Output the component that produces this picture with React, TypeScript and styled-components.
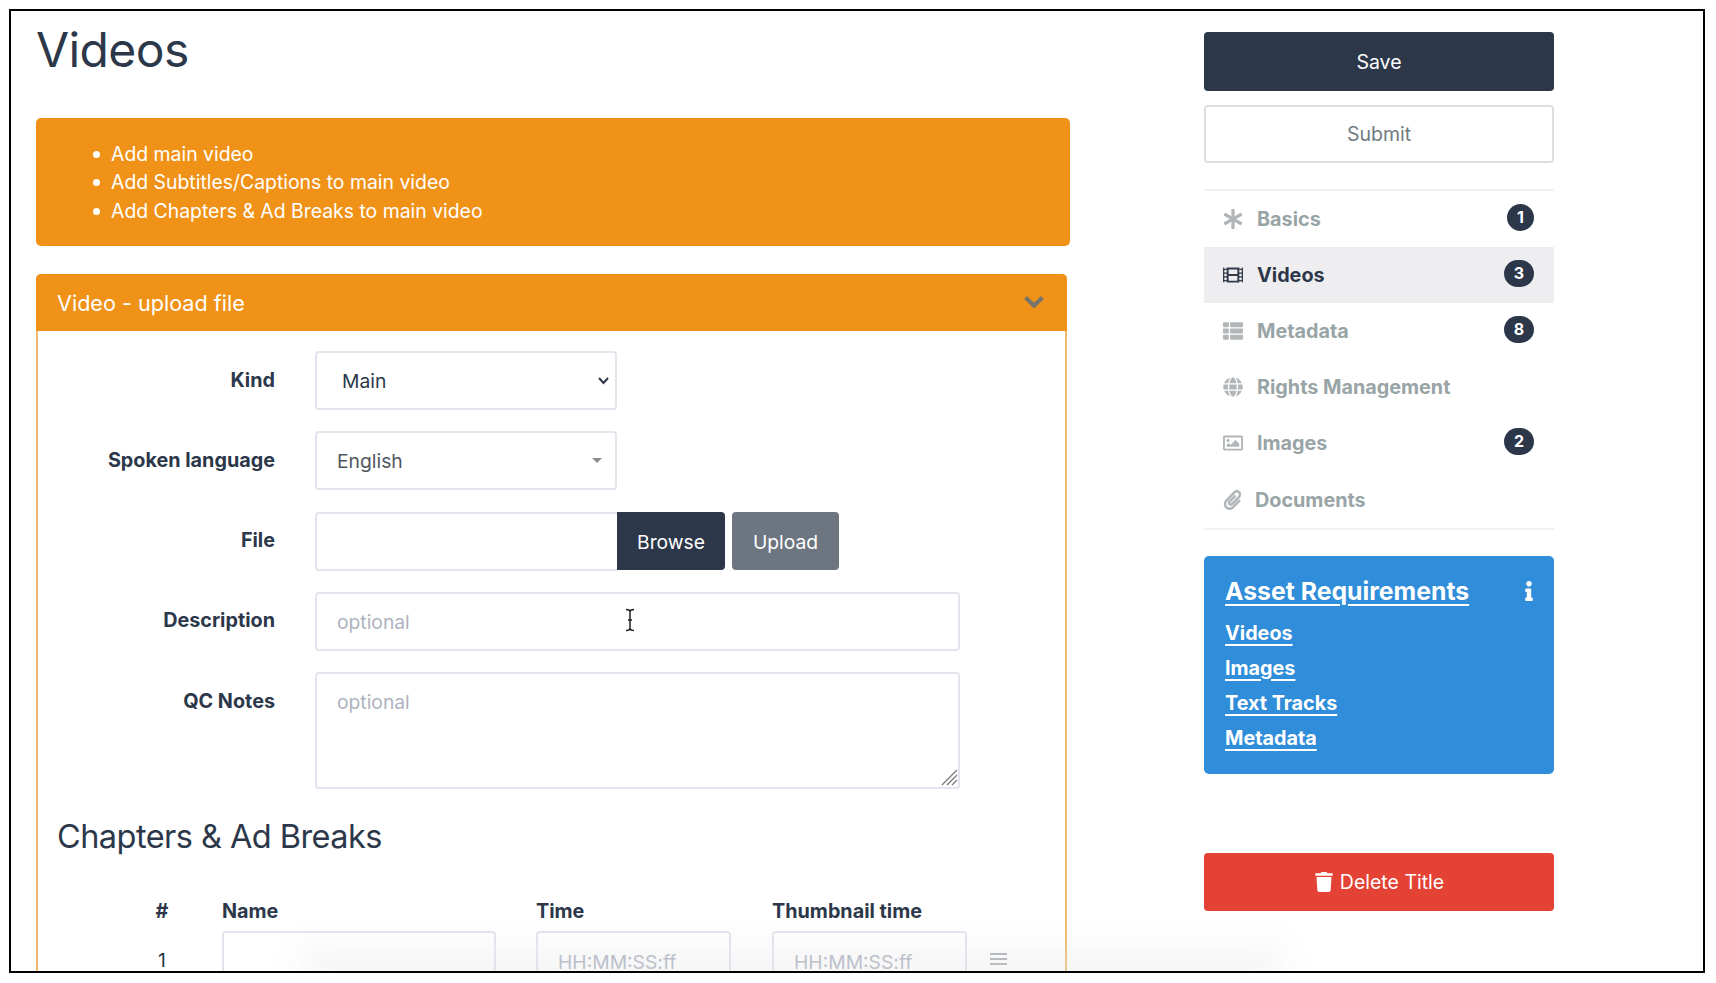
import React from 'react';
import styled, { createGlobalStyle } from 'styled-components';
import { FaAsterisk, FaFilm, FaThList, FaGlobe, FaRegImage, FaPaperclip, FaInfo, FaTrash } from 'react-icons/fa';

const navy = '#2c384a';
const orange = '#f09218';

const Global = createGlobalStyle`
  html, body { margin: 0; padding: 0; background: #fff; }
  body { font-family: Inter, "Liberation Sans", sans-serif; color: ${navy}; font-size: 19.3px; }
  * { box-sizing: border-box; }
`;

const Frame = styled.div`
  position: relative;
  margin: 9px 0 0 9px;
  width: 1696px;
  height: 964px;
  border: 2px solid #000;
  overflow: hidden;
  display: flex;
  align-items: flex-start;
  gap: 134px;
  padding-left: 25px;
`;

const Main = styled.main`
  width: 1034px;
  flex: none;
`;

const Title = styled.h1`
  margin: 0;
  height: 107px;
  font-size: 48px;
  line-height: 77px;
  font-weight: 400;
  letter-spacing: -0.6px;
`;

const Alert = styled.div`
  height: 128px;
  background: ${orange};
  border-radius: 5px;
  color: #fff;
  margin-bottom: 28px;
  padding: 22px 0 0 75px;
  font-size: 19.4px;
`;

const AlertList = styled.ul`
  margin: 0;
  padding: 0;
  list-style: none;
  li { position: relative; line-height: 28.4px; margin: 0; }
  li::before {
    content: '';
    position: absolute;
    left: -18px;
    top: 11px;
    width: 7px;
    height: 7px;
    border-radius: 50%;
    background: #fff;
  }
`;

const Card = styled.section`
  width: 1031px;
  border: 2px solid #ecbc6c;
  border-top: none;
  border-radius: 5px 5px 0 0;
`;

const CardHeader = styled.header`
  height: 57px;
  margin: 0 -2px;
  background: ${orange};
  border-radius: 5px 5px 0 0;
  color: #fff;
  display: flex;
  align-items: center;
  justify-content: space-between;
  padding: 1px 22px 0 21px;
  font-size: 21.6px;
`;

const Chevron = styled.svg`
  width: 22px;
  height: 15px;
  margin-top: -4px;
`;

const CardBody = styled.div`
  padding: 20px 0 0 19px;
`;

const Form = styled.div`
  display: grid;
  grid-template-columns: 218px 1fr;
  column-gap: 40px;
  row-gap: 21.25px;
`;

const Label = styled.label<{ $top?: boolean }>`
  text-align: right;
  font-weight: 700;
  font-size: 19.8px;
  line-height: 29px;
  align-self: ${p => (p.$top ? 'start' : 'center')};
  padding-top: ${p => (p.$top ? '16px' : '0')};
  margin-top: -1px;
  color: ${navy};
`;

const Control = styled.div<{ $w?: number }>`
  position: relative;
  width: ${p => (p.$w ? `${p.$w}px` : 'auto')};
  display: flex;
`;

const fieldCss = `
  display: block;
  width: 100%;
  border: 2px solid #e3e5ee;
  border-radius: 4px;
  background: #fff;
  font-family: inherit;
  font-size: 19.3px;
  color: ${navy};
  outline: none;
  &::placeholder { color: #aeb4bf; opacity: 1; }
`;

const Select = styled.select<{ $pad: number; $muted?: boolean }>`
  ${fieldCss}
  height: 59px;
  appearance: none;
  padding: 1px 0 0 ${p => p.$pad}px;
  color: ${p => (p.$muted ? '#4f5660' : navy)};
`;

const SelectChevron = styled.svg`
  position: absolute;
  right: 7px;
  top: 25px;
  width: 13px;
  height: 9px;
`;

const SelectCaret = styled.span`
  position: absolute;
  right: 15px;
  top: 27px;
  border-left: 5px solid transparent;
  border-right: 5px solid transparent;
  border-top: 5px solid #8d8d8d;
`;

const Input = styled.input`
  ${fieldCss}
  height: 59px;
  padding: 1px 20px 0;
`;

const FileInput = styled.input`
  ${fieldCss}
  flex: none;
  width: 302px;
  height: 59px;
  border-right: none;
  border-radius: 4px 0 0 4px;
`;

const FileBtn = styled.button<{ $bg: string; $w: number; $left?: number; $square?: boolean }>`
  flex: none;
  width: ${p => p.$w}px;
  height: 58px;
  margin-left: ${p => p.$left ?? 0}px;
  padding: 2px 0 0;
  border: none;
  border-radius: ${p => (p.$square ? '0 4px 4px 0' : '4px')};
  background: ${p => p.$bg};
  color: #fff;
  font-family: inherit;
  font-size: 19.3px;
`;

const Area = styled.textarea`
  ${fieldCss}
  height: 117px;
  padding: 16px 20px;
  resize: none;
`;

const Hatch = styled.svg`
  position: absolute;
  right: 2px;
  bottom: 3px;
  width: 17px;
  height: 17px;
`;

const Cursor = styled.svg`
  position: absolute;
  left: 310px;
  top: 16px;
  width: 10px;
  height: 24px;
`;

const Heading = styled.h3`
  margin: 23px 0 0;
  font-size: 32.5px;
  line-height: 50px;
  font-weight: 400;
  letter-spacing: -0.55px;
`;

const Table = styled.div`
  display: grid;
  grid-template-columns: 40px 274px 196px 195px 24px;
  column-gap: 40px;
  margin: 35px 0 0 85px;
  align-items: center;
`;

const Th = styled.div<{ $center?: boolean }>`
  font-weight: 700;
  font-size: 19.8px;
  line-height: 29px;
  margin-bottom: 5px;
  text-align: ${p => (p.$center ? 'center' : 'left')};
`;

const Td = styled.div`
  text-align: center;
  margin-top: -2px;
`;

const CellInput = styled.input`
  ${fieldCss}
  height: 59px;
  padding: 3px 20px 0;
`;

const TimeInput = styled(CellInput)`
  width: 195px;
`;

const Drag = styled.div`
  margin-left: -17px;
  margin-top: -3px;
  width: 17px;
  display: flex;
  flex-direction: column;
  gap: 3px;
  span { display: block; height: 2px; background: #a9adb3; }
`;

const Side = styled.aside`
  width: 350px;
  flex: none;
  padding-top: 21px;
`;

const Btn = styled.button<{ $bg: string; $fg: string; $line?: string; $h: number; $mt?: number }>`
  display: flex;
  align-items: center;
  justify-content: center;
  gap: 6px;
  width: 100%;
  height: ${p => p.$h}px;
  margin-top: ${p => p.$mt ?? 0}px;
  background: ${p => p.$bg};
  color: ${p => p.$fg};
  border: ${p => (p.$line ? `2px solid ${p.$line}` : 'none')};
  border-radius: 4px;
  font-family: inherit;
  font-size: 19.5px;
`;

const Nav = styled.nav`
  margin-top: 26px;
  border-bottom: 2px solid #f0f1f1;
  border-top: 2px solid #f0f1f1;
`;

const NavRow = styled.div<{ $active?: boolean }>`
  height: 56.1px;
  display: flex;
  align-items: center;
  padding: 0 20px 0 19px;
  background: ${p => (p.$active ? '#eeedef' : 'transparent')};
  color: ${p => (p.$active ? navy : '#98a4a6')};
  font-weight: 700;
  font-size: 19.8px;
  & + & { border-top: ${p => (p.$active ? 'none' : '2px solid #f3f4f4')}; }
`;

const NavIcon = styled.span<{ $w: number; $active?: boolean }>`
  flex: none;
  width: ${p => p.$w}px;
  margin-right: 13px;
  display: flex;
  font-size: 20px;
  color: ${p => (p.$active ? '#333c4a' : '#b2b6b8')};
`;

const NavText = styled.span`
  flex: 1;
`;

const Badge = styled.span<{ $w: number }>`
  width: ${p => p.$w}px;
  height: 27px;
  margin-top: -4px;
  border-radius: 14px;
  background: ${navy};
  color: #fff;
  display: flex;
  align-items: center;
  justify-content: center;
  font-size: 16px;
  font-weight: 700;
`;

const Asset = styled.div`
  margin-top: 26px;
  height: 218px;
  background: #308dd9;
  border-radius: 5px;
  color: #fff;
  padding: 17px 21px 0;
  font-weight: 700;
`;

const AssetHead = styled.div`
  display: flex;
  align-items: center;
  justify-content: space-between;
  margin-bottom: 7px;
  svg { margin-right: -6px; }
`;

const AssetTitle = styled.a`
  font-size: 24.8px;
  line-height: 36px;
  text-decoration: underline;
  text-underline-offset: 4px;
  text-decoration-thickness: 1.5px;
`;

const AssetLink = styled.a`
  display: block;
  width: fit-content;
  font-size: 19.8px;
  line-height: 35px;
  text-decoration: underline;
  text-underline-offset: 4px;
  text-decoration-thickness: 1.5px;
`;

const Smudge = styled.div`
  position: absolute;
  left: 290px;
  right: 420px;
  bottom: -16px;
  height: 40px;
  background: rgba(225, 227, 230, 0.35);
  filter: blur(16px);
  pointer-events: none;
`;

const nav = [
  { label: 'Basics', icon: <FaAsterisk />, w: 21, badge: '1', bw: 27 },
  { label: 'Videos', icon: <FaFilm />, w: 21, badge: '3', bw: 30, active: true },
  { label: 'Metadata', icon: <FaThList />, w: 21, badge: '8', bw: 30 },
  { label: 'Rights Management', icon: <FaGlobe />, w: 21 },
  { label: 'Images', icon: <FaRegImage />, w: 21, badge: '2', bw: 30 },
  { label: 'Documents', icon: <FaPaperclip />, w: 19 },
];

export default function App() {
  return (
    <>
      <Global />
      <Frame>
        <Main>
          <Title>Videos</Title>
          <Alert>
            <AlertList>
              <li>Add main video</li>
              <li>Add Subtitles/Captions to main video</li>
              <li>Add Chapters &amp; Ad Breaks to main video</li>
            </AlertList>
          </Alert>
          <Card>
            <CardHeader>
              Video - upload file
              <Chevron viewBox="0 0 22 15"><path d="M2.5 3.5L11 11.5l8.5-8" fill="none" stroke="#77736b" strokeWidth="4.2" /></Chevron>
            </CardHeader>
            <CardBody>
              <Form>
                <Label>Kind</Label>
                <Control $w={302}>
                  <Select $pad={25} defaultValue="Main"><option>Main</option></Select>
                  <SelectChevron viewBox="0 0 13 9"><path d="M2 2l4.5 5L11 2" fill="none" stroke="#2c384a" strokeWidth="2" /></SelectChevron>
                </Control>
                <Label>Spoken language</Label>
                <Control $w={302}>
                  <Select $pad={20} $muted defaultValue="English"><option>English</option></Select>
                  <SelectCaret />
                </Control>
                <Label>File</Label>
                <Control>
                  <FileInput readOnly />
                  <FileBtn $bg="#2c384a" $w={108} $square>Browse</FileBtn>
                  <FileBtn $bg="#6c7580" $w={107} $left={7}>Upload</FileBtn>
                </Control>
                <Label>Description</Label>
                <Control $w={645}>
                  <Input placeholder="optional" />
                  <Cursor viewBox="0 0 10 24">
                    <path d="M1 1.5c2 0 4 .5 4 2.5v16c0 2-2 2.5-4 2.5M9 1.5c-2 0-4 .5-4 2.5v16c0 2 2 2.5 4 2.5M3 12h4" fill="none" stroke="#222" strokeWidth="1.5" />
                  </Cursor>
                </Control>
                <Label $top>QC Notes</Label>
                <Control $w={645}>
                  <Area placeholder="optional" />
                  <Hatch viewBox="0 0 17 17">
                    <path d="M1 16L16 1M6 16L16 6M11 16l5-5" stroke="#77797d" strokeWidth="1.3" />
                  </Hatch>
                </Control>
              </Form>
              <Heading>Chapters &amp; Ad Breaks</Heading>
              <Table>
                <Th $center>#</Th>
                <Th>Name</Th>
                <Th>Time</Th>
                <Th>Thumbnail time</Th>
                <span />
                <Td>1</Td>
                <CellInput />
                <TimeInput placeholder="HH:MM:SS:ff" />
                <TimeInput placeholder="HH:MM:SS:ff" />
                <Drag><span /><span /><span /></Drag>
              </Table>
            </CardBody>
          </Card>
        </Main>
        <Side>
          <Btn $bg="#2c384a" $fg="#fff" $h={59}>Save</Btn>
          <Btn $bg="#fff" $fg="#6f7a80" $line="#dcdfe2" $h={58} $mt={14}>Submit</Btn>
          <Nav>
            {nav.map(n => (
              <NavRow key={n.label} $active={n.active}>
                <NavIcon $w={n.w} $active={n.active}>{n.icon}</NavIcon>
                <NavText>{n.label}</NavText>
                {n.badge && <Badge $w={n.bw!}>{n.badge}</Badge>}
              </NavRow>
            ))}
          </Nav>
          <Asset>
            <AssetHead>
              <AssetTitle>Asset Requirements</AssetTitle>
              <FaInfo size={20} />
            </AssetHead>
            <AssetLink>Videos</AssetLink>
            <AssetLink>Images</AssetLink>
            <AssetLink>Text Tracks</AssetLink>
            <AssetLink>Metadata</AssetLink>
          </Asset>
          <Btn $bg="#e34234" $fg="#fff" $h={58} $mt={79}><FaTrash size={20} />Delete Title</Btn>
        </Side>
        <Smudge />
      </Frame>
    </>
  );
}
